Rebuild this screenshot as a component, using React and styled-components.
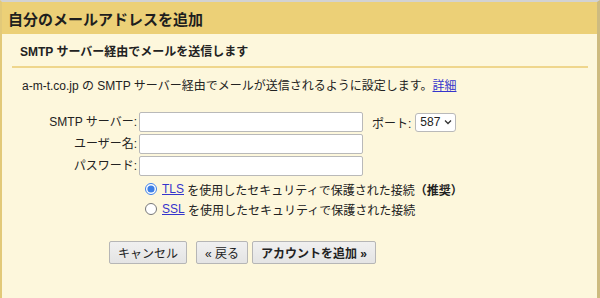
import React, { useState } from "react"
import styled, { createGlobalStyle } from "styled-components"

const GlobalStyle = createGlobalStyle`
    html, body {
        margin: 0;
        padding: 0;
        background: #fdf7dc;
    }
    body {
        font-family: "Liberation Sans", "Noto Sans CJK JP", sans-serif;
        color: #222;
    }
`;

const Frame = styled.div`
    box-sizing: border-box;
    width: 600px;
    height: 298px;
    border-top: 2px solid #d2d2d2;
    border-left: 2px solid #e2c979;
    border-right: 3px solid #cdbb80;
    background: #fdf7dc;
    overflow: hidden;
`;

const TitleBar = styled.div`
    height: 32px;
    display: flex;
    align-items: center;
    padding-left: 6px;
    background: #ecd077;
    font-size: 15px;
    font-weight: 700;
    color: #1e1e1e;
`;

const Section = styled.div`
    margin: 0 9px 0 10px;
`;

const SubHeading = styled.div`
    height: 32px;
    display: flex;
    align-items: center;
    padding-left: 8px;
    font-size: 12px;
    font-weight: 700;
    border-bottom: 2px solid #efd68c;
`;

const Description = styled.p`
    margin: 9px 0 0 10px;
    font-size: 12px;
    line-height: 18px;
`;

const Link = styled.a`
    color: #3535cc;
    text-decoration: underline;
    cursor: pointer;
`;

const FormGrid = styled.div`
    display: grid;
    grid-template-columns: 115px auto;
    column-gap: 2px;
    row-gap: 2px;
    margin: 17px 0 0 10px;
    font-size: 12px;
`;

const Label = styled.label`
    text-align: right;
    line-height: 20px;
    white-space: nowrap;
`;

const Field = styled.div`
    display: flex;
    align-items: center;
`;

const TextInput = styled.input`
    box-sizing: border-box;
    width: 224px;
    height: 20px;
    border: 1px solid #b9b9b9;
    border-radius: 2px;
    background: #fff;
    font-size: 12px;
    padding: 0 3px;
    outline: none;
`;

const PortLabel = styled.span`
    margin-left: 9px;
    margin-right: 4px;
    white-space: nowrap;
`;

const PortSelect = styled.div`
    box-sizing: border-box;
    width: 41px;
    height: 19px;
    display: flex;
    align-items: center;
    justify-content: space-between;
    padding: 0 3px 0 4px;
    border: 1px solid #b9b9b9;
    border-radius: 3px;
    background: #fff;
    font-size: 12px;
`;

const RadioGroup = styled.div`
    grid-column: 2;
    margin: 1px 0 0 4px;
    display: flex;
    flex-direction: column;
`;

const RadioRow = styled.label`
    display: flex;
    align-items: center;
    height: 20px;
    white-space: nowrap;
`;

const Radio = styled.input`
    width: 12px;
    height: 12px;
    margin: 0 5px 0 2px;
    accent-color: #3d7fe6;
`;

const Strong = styled.b`
    font-weight: 700;
`;

const Buttons = styled.div`
    display: flex;
    margin: 22px 0 0 97px;
`;

const Button = styled.button`
    box-sizing: border-box;
    height: 23px;
    padding: 0 8px;
    margin-left: ${p => p.gap || 0}px;
    border: 1px solid #b6b6b6;
    border-radius: 2px;
    background: linear-gradient(#f0f0f0, #e4e4e4);
    font-family: inherit;
    font-size: 12px;
    font-weight: ${p => (p.primary ? 700 : 400)};
    color: #222;
    white-space: nowrap;
    cursor: pointer;
`;

const App = () => {
    const [security, setSecurity] = useState("tls")

    return (
        <>
            <GlobalStyle />
            <Frame>
                <TitleBar>自分のメールアドレスを追加</TitleBar>
                <Section>
                    <SubHeading>SMTP サーバー経由でメールを送信します</SubHeading>
                    <Description>
                        a-m-t.co.jp の SMTP サーバー経由でメールが送信されるように設定します。<Link>詳細</Link>
                    </Description>
                    <FormGrid>
                        <Label>SMTP サーバー:</Label>
                        <Field>
                            <TextInput />
                            <PortLabel>ポート:</PortLabel>
                            <PortSelect>
                                587
                                <svg width="8" height="6" viewBox="0 0 8 6">
                                    <path d="M1 1.5 L4 4.5 L7 1.5" fill="none" stroke="#333" strokeWidth="1.3" />
                                </svg>
                            </PortSelect>
                        </Field>
                        <Label>ユーザー名:</Label>
                        <Field><TextInput /></Field>
                        <Label>パスワード:</Label>
                        <Field><TextInput type="password" /></Field>
                        <RadioGroup>
                            <RadioRow>
                                <Radio type="radio" name="sec" checked={security === "tls"} onChange={() => setSecurity("tls")} />
                                <Link>TLS</Link>&nbsp;を使用したセキュリティで保護された接続<Strong>（推奨）</Strong>
                            </RadioRow>
                            <RadioRow>
                                <Radio type="radio" name="sec" checked={security === "ssl"} onChange={() => setSecurity("ssl")} />
                                <Link>SSL</Link>&nbsp;を使用したセキュリティで保護された接続
                            </RadioRow>
                        </RadioGroup>
                    </FormGrid>
                    <Buttons>
                        <Button>キャンセル</Button>
                        <Button gap={9}>« 戻る</Button>
                        <Button gap={4} primary>アカウントを追加 »</Button>
                    </Buttons>
                </Section>
            </Frame>
        </>
    )
}

export default App
